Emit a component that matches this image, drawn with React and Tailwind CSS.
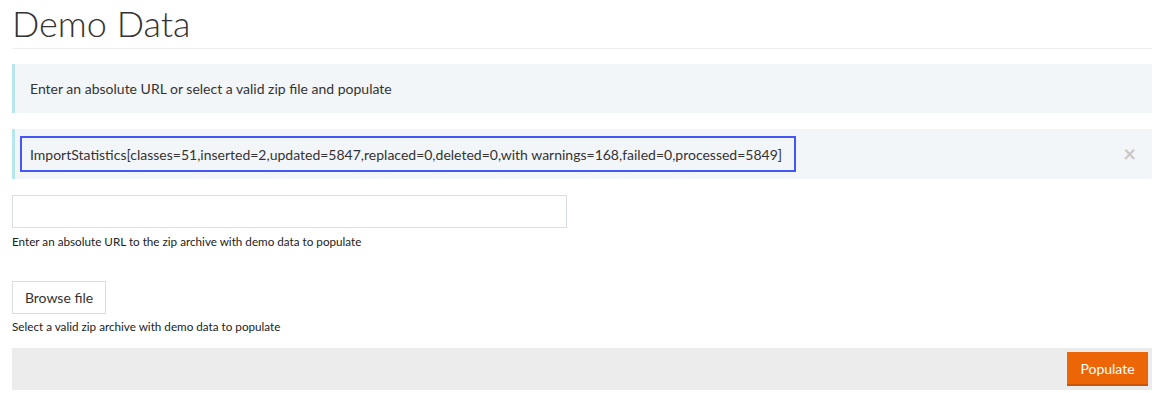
export default function App() {
  return (
    <div className="min-h-screen bg-white pl-3 pr-[7px] text-[#333] font-['Lato','Open_Sans',sans-serif]">
      <h1 className="pt-[3px] pb-[5px] text-[36px] font-light leading-[40px] text-[#333]">Demo Data</h1>
      <hr className="border-t border-[#eee]" />

      <div className="mt-[15px] flex h-[49px] items-center border-l-[3px] border-[#b8e6ef] bg-[#f3f6f9] pl-[15px] text-[14px]">
        Enter an absolute URL or select a valid zip file and populate
      </div>

      <div className="mt-4 flex h-[50px] items-center justify-between border-l-[3px] border-[#b8e6ef] bg-[#f3f6f9] pl-[5px] pr-4 text-[14px]">
        <div className="flex h-[36px] items-center border-2 border-[#4257f5] pl-2 pr-[12px]">
          ImportStatistics[classes=51,inserted=2,updated=5847,replaced=0,deleted=0,with warnings=168,failed=0,processed=5849]
        </div>
        <span className="text-[22px] font-bold leading-none text-[#c8c8c8]">×</span>
      </div>

      <div className="mt-4">
        <input type="text" className="block h-[33px] w-[555px] border border-[#d9dee3] bg-white px-2 outline-none" />
        <p className="mt-[5px] text-[11.7px] leading-4 text-[#222]">Enter an absolute URL to the zip archive with demo data to populate</p>
      </div>

      <div className="mt-[32px]">
        <button className="h-[33px] w-[94px] border border-[#d9dee3] bg-white text-[14px] text-[#333]">Browse file</button>
        <p className="mt-[4px] text-[11.7px] leading-4 text-[#222]">Select a valid zip archive with demo data to populate</p>
      </div>

      <div className="mt-[14px] flex h-[42px] items-center justify-end bg-[#ececec] pr-1">
        <button className="h-[34px] w-[81px] border-b-2 border-[#c9560a] bg-[#ec6608] text-[14px] text-white">Populate</button>
      </div>
    </div>
  )
}
